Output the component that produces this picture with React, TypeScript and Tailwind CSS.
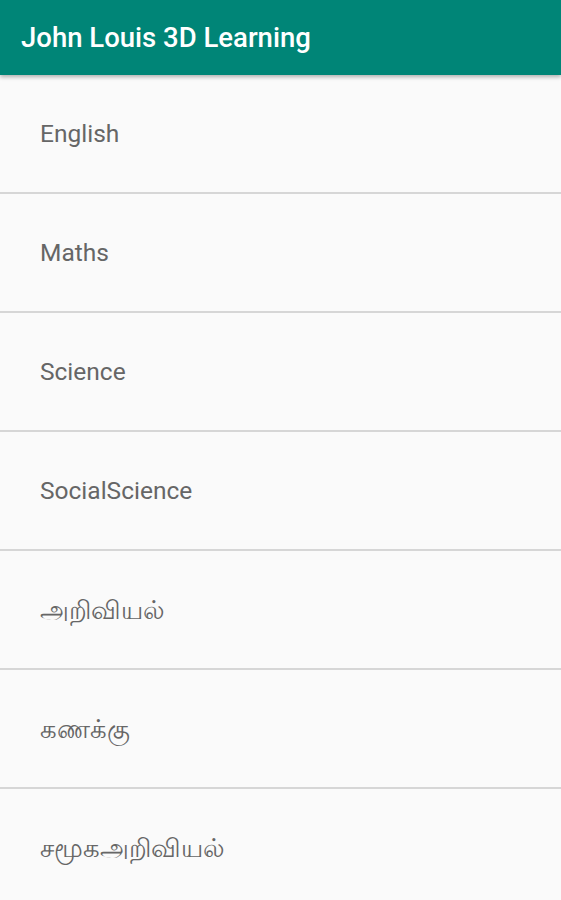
const subjects = [
  { name: "English", tamil: false },
  { name: "Maths", tamil: false },
  { name: "Science", tamil: false },
  { name: "SocialScience", tamil: false },
  { name: "அறிவியல்", tamil: true },
  { name: "கணக்கு", tamil: true },
  { name: "சமூகஅறிவியல்", tamil: true },
];

export default function App() {
  return (
    <div className="flex min-h-[900px] w-full flex-col bg-[#fafafa] font-['Roboto',sans-serif]">
      <header className="z-10 flex h-[75px] items-center bg-[#008577] px-[21px] shadow-[0_2px_4px_rgba(0,0,0,0.3)]">
        <h1 className="text-[27.5px] font-medium text-white">John Louis 3D Learning</h1>
      </header>

      <ul className="flex flex-col">
        {subjects.map((subject, index) => (
          <li
            key={index}
            className={
              subject.tamil
                ? "flex h-[119px] items-center border-b-2 border-[#d6d6d6] pl-[40px] pt-[2px] text-[25.5px] text-[#666666]"
                : "flex h-[119px] items-center border-b-2 border-[#d6d6d6] pl-[40px] pt-[2px] text-[24.5px] text-[#666666]"
            }
          >
            {subject.name}
          </li>
        ))}
      </ul>
    </div>
  );
}
